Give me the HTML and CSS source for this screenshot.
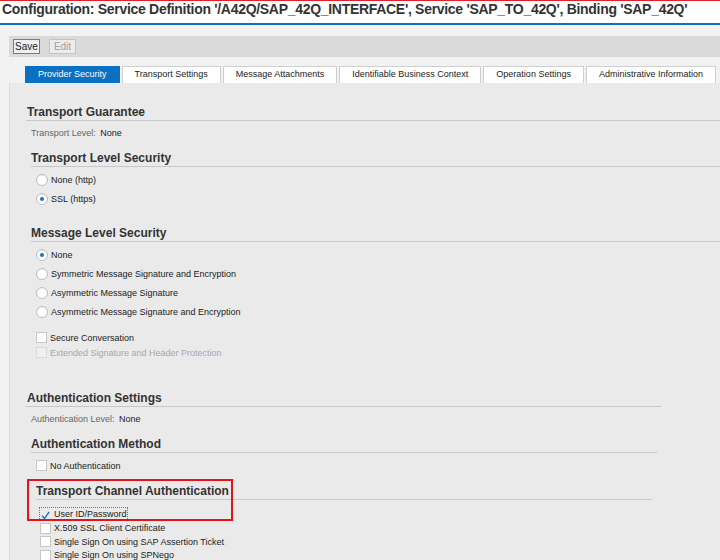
FILE: index.html
```html
<!DOCTYPE html>
<html>
<head>
<meta charset="utf-8">
<link rel="stylesheet" href="styles.css">
</head>
<body>
<div class="titlebar">
  <h1 class="title">Configuration: Service Definition '/A42Q/SAP_42Q_INTERFACE', Service 'SAP_TO_42Q', Binding 'SAP_42Q'</h1>
</div>
<div class="page">
  <div class="toolbar">
    <button class="btn">Save</button>
    <button class="btn btn-disabled">Edit</button>
  </div>
  <div class="tabs">
    <div class="tab tab-active">Provider Security</div>
    <div class="tab">Transport Settings</div>
    <div class="tab">Message Attachments</div>
    <div class="tab">Identifiable Business Context</div>
    <div class="tab">Operation Settings</div>
    <div class="tab">Administrative Information</div>
  </div>
  <div class="panel">
    <h2 class="head head-a head-first">Transport Guarantee</h2>
    <div class="field"><span class="lbl">Transport Level:</span> <span class="val">None</span></div>

    <h2 class="head head-b head-tls">Transport Level Security</h2>
    <div class="opts">
      <div class="radio-row"><span class="radio"></span><span class="txt">None (http)</span></div>
      <div class="radio-row"><span class="radio radio-on"></span><span class="txt">SSL (https)</span></div>
    </div>

    <h2 class="head head-b head-mls">Message Level Security</h2>
    <div class="opts">
      <div class="radio-row"><span class="radio radio-on"></span><span class="txt">None</span></div>
      <div class="radio-row"><span class="radio"></span><span class="txt">Symmetric Message Signature and Encryption</span></div>
      <div class="radio-row"><span class="radio"></span><span class="txt">Asymmetric Message Signature</span></div>
      <div class="radio-row"><span class="radio"></span><span class="txt">Asymmetric Message Signature and Encryption</span></div>
    </div>
    <div class="checks checks-mls">
      <div class="check-row"><span class="box"></span><span class="txt">Secure Conversation</span></div>
      <div class="check-row check-disabled"><span class="box"></span><span class="txt">Extended Signature and Header Protection</span></div>
    </div>

    <h2 class="head head-a head-as">Authentication Settings</h2>
    <div class="field"><span class="lbl">Authentication Level:</span> <span class="val">None</span></div>

    <h2 class="head head-b head-am">Authentication Method</h2>
    <div class="checks checks-am">
      <div class="check-row"><span class="box"></span><span class="txt">No Authentication</span></div>
    </div>

    <div class="tca">
      <h2 class="head head-c">Transport Channel Authentication</h2>
      <div class="checks checks-tca">
        <div class="check-row check-row-tca"><span class="focus"><span class="box box-checked"><svg width="11" height="11" viewBox="0 0 11 11"><path d="M1.2 5.6 L4.2 9.2 L10 1" fill="none" stroke="#1a73c8" stroke-width="1.7"/></svg></span><span class="txt">User ID/Password</span></span></div>
        <div class="check-row check-row-tca"><span class="box"></span><span class="txt">X.509 SSL Client Certificate</span></div>
        <div class="check-row check-row-tca"><span class="box"></span><span class="txt">Single Sign On using SAP Assertion Ticket</span></div>
        <div class="check-row check-row-tca"><span class="box"></span><span class="txt">Single Sign On using SPNego</span></div>
      </div>
      <div class="highlight"></div>
    </div>
  </div>
</div>
</body>
</html>
```
FILE: styles.css
```css
html, body {
  margin: 0;
  padding: 0;
}
body {
  width: 720px;
  height: 560px;
  overflow: hidden;
  font-family: "Liberation Sans", Arial, sans-serif;
  background: #f2f2f2;
  color: #222;
}
.titlebar {
  background: #ffffff;
  border-top: 1px solid #e3202a;
  border-bottom: 2px solid #1670c0;
  height: 22px;
  box-sizing: content-box;
}
.title {
  margin: 0;
  padding: 0 0 0 2px;
  font-size: 14px;
  letter-spacing: -0.3px;
  line-height: 16px;
  font-weight: bold;
  color: #333;
  white-space: nowrap;
}
.page {
  padding-top: 11px;
  height: 524px;
  display: flex;
  flex-direction: column;
}
.toolbar {
  flex-shrink: 0;
  margin-left: 9px;
  height: 21px;
  background: #dadada;
  display: flex;
  align-items: flex-start;
  padding: 3px 0 0 4px;
  box-sizing: border-box;
  gap: 9px;
}
.btn {
  font-family: "Liberation Sans", Arial, sans-serif;
  font-size: 10px;
  height: 15px;
  width: 27px;
  padding: 0;
  margin: 0;
  line-height: 13px;
  background: #f0f0f0;
  border: 1px solid #7a7a7a;
  color: #222;
}
.btn-disabled {
  border-color: #c4c4c4;
  color: #a0a0a0;
  background: #ececec;
}
.tabs {
  flex-shrink: 0;
  display: flex;
  margin: 9px 0 0 25px;
  gap: 2px;
}
.tab {
  height: 17px;
  box-sizing: border-box;
  line-height: 15px;
  font-size: 9px;
  padding: 0 12px;
  background: #fff;
  border: 1px solid #cfcfcf;
  border-bottom: none;
  color: #222;
  white-space: nowrap;
}
.tab-active {
  background: #0a70c2;
  border-color: #0a70c2;
  color: #fff;
}
.panel {
  flex: 1;
  min-height: 0;
  overflow: hidden;
  margin-left: 9px;
  background: #eaeaea;
  border-left: 1px solid #dcdcdc;
  display: flex;
  flex-direction: column;
}
.panel > * {
  flex-shrink: 0;
}
.head {
  margin: 0;
  font-size: 12px;
  font-weight: bold;
  color: #333;
  height: 16px;
  line-height: 16px;
  border-bottom: 1px solid #c8c8c8;
  white-space: nowrap;
}
.head-a {
  margin-left: 16px;
  padding-left: 1px;
}
.head-b {
  margin-left: 21px;
}
.head-c {
  margin-left: 26px;
  margin-right: 68px;
}
.head-first { margin-top: 21px; }
.head-tls { margin-top: 10px; }
.head-mls { margin-top: 17px; }
.head-as { margin-top: 30px; margin-right: 59px; }
.head-am { margin-top: 10px; margin-right: 63px; }

.field {
  margin: 5px 0 0 21px;
  height: 14px;
  line-height: 14px;
  font-size: 9px;
}
.lbl { color: #666; }
.val { color: #222; margin-left: 2px; }

.opts {
  margin-top: 3px;
}
.radio-row {
  height: 19px;
  display: flex;
  align-items: center;
  padding-left: 26px;
  font-size: 9px;
}
.radio {
  width: 10px;
  height: 10px;
  border-radius: 50%;
  border: 1px solid #bdbdbd;
  background: #fff;
  margin-right: 3px;
  display: flex;
  align-items: center;
  justify-content: center;
  box-shadow: inset 0 1px 1px rgba(0,0,0,0.06);
}
.radio-on::after {
  content: "";
  width: 4px;
  height: 4px;
  border-radius: 50%;
  background: #1473c6;
}
.txt { white-space: nowrap; }

.checks-mls { margin-top: 9px; }
.checks-am { margin-top: 5px; }
.check-row {
  height: 15px;
  display: flex;
  align-items: center;
  padding-left: 26px;
  font-size: 9px;
}
.box {
  width: 9px;
  height: 9px;
  border: 1px solid #c6c6c6;
  background: #fff;
  margin-right: 3px;
  display: flex;
}
.check-disabled { color: #a8a8a8; }
.check-disabled .box {
  background: #f0f0f0;
  border-color: #dadada;
}

.tca {
  position: relative;
  padding-top: 10px;
}
.checks-tca { margin-top: 7.5px; }
.check-row-tca {
  height: 13.7px;
  padding-left: 30px;
  font-size: 9px;
}
.focus {
  display: flex;
  align-items: center;
  outline: 1px dotted #777;
  height: 12px;
}
.box-checked {
  border-color: transparent;
  background: transparent;
}
.highlight {
  position: absolute;
  left: 17px;
  top: 6px;
  width: 206px;
  height: 42px;
  box-sizing: border-box;
  border: 2px solid #e5141c;
}
```
